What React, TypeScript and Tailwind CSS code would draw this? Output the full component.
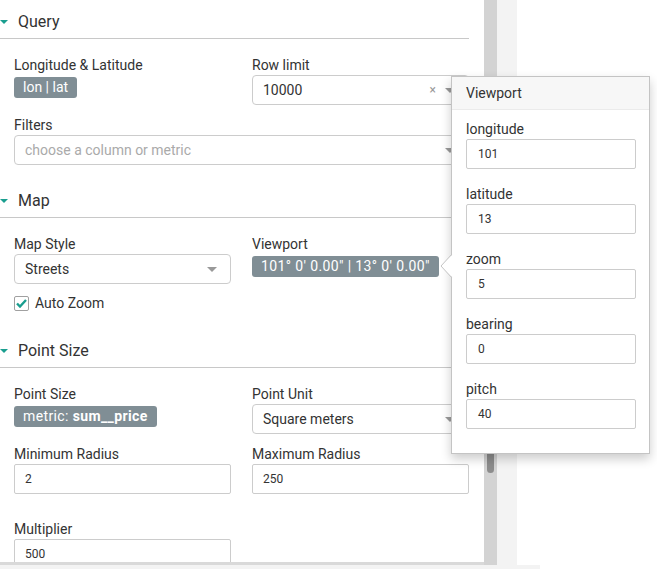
import React from "react";

const Caret = () => (
  <span className="w-0 h-0 border-x-[5px] border-x-transparent border-t-[5px] border-t-[#999]" />
);

function SectionHeader({ title }: { title: string }) {
  return (
    <div className="flex items-center h-[39px] pt-[5px] border-b border-[#c8c8c8]">
      <span className="w-0 h-0 border-x-[4px] border-x-transparent border-t-[4px] border-t-[#1a9e8f]" />
      <span className="ml-[10px] text-[16px] text-[#333]">{title}</span>
    </div>
  );
}

const Label = ({ children }: { children: React.ReactNode }) => (
  <div className="h-[20px] text-[14px] leading-[20px] text-[#333]">{children}</div>
);

const Tag = ({ children, wide }: { children: React.ReactNode; wide?: boolean }) => (
  <span
    className={
      wide
        ? "inline-block h-[21px] px-[9px] rounded-[3px] bg-[#808e95] text-white text-[14px] leading-[21px] whitespace-nowrap tracking-[0.38px]"
        : "inline-block h-[21px] px-[9px] rounded-[3px] bg-[#808e95] text-white text-[14px] leading-[21px] whitespace-nowrap"
    }
  >
    {children}
  </span>
);

function Select({ value, placeholder, clear }: { value?: string; placeholder?: string; clear?: boolean }) {
  return (
    <div className="flex items-center h-[30px] pl-[10px] pr-[13px] border border-[#ccc] rounded-[4px] bg-white text-[14px]">
      {value ? (
        <span className="flex-1 text-[#333]">{value}</span>
      ) : (
        <span className="flex-1 text-[#aaa]">{placeholder}</span>
      )}
      {clear && <span className="mr-[9px] text-[12px] text-[#999]">×</span>}
      <Caret />
    </div>
  );
}

const Input = ({ value }: { value: string }) => (
  <div className="flex items-center h-[30px] pl-[10px] border border-[#ccc] rounded-[2px] bg-white text-[12px] text-[#333]">
    {value}
  </div>
);

function ViewportPopover() {
  const fields: [string, string][] = [
    ["longitude", "101"],
    ["latitude", "13"],
    ["zoom", "5"],
    ["bearing", "0"],
    ["pitch", "40"],
  ];
  return (
    <div className="absolute left-[451px] top-[76px] w-[199px] bg-white border border-[#c4c4c4] shadow-[0_5px_10px_rgba(0,0,0,0.2)] z-10">
      <svg className="absolute left-[-12px] top-[177px]" width="13" height="24" viewBox="0 0 13 24">
        <polygon points="13,0 1,12 13,24" fill="white" />
        <polyline points="12,0 1,12 12,24" fill="none" stroke="#c4c4c4" />
      </svg>
      <div className="h-[33px] flex items-center px-[14px] bg-[#f7f7f7] border-b border-[#ebebeb] text-[14px] text-[#333]">
        Viewport
      </div>
      <div className="pl-[14px] pr-[13px] pt-[9px] pb-[9px]">
        {fields.map(([name, val]) => (
          <div key={name} className="mb-[15px]">
            <Label>{name}</Label>
            <div className="flex items-center h-[30px] pl-[11px] border border-[#ccc] rounded-[2px] text-[12px] text-[#333]">
              {val}
            </div>
          </div>
        ))}
      </div>
    </div>
  );
}

export default function App() {
  return (
    <div className="relative w-[657px] h-[569px] bg-white overflow-hidden font-['Roboto',sans-serif]">
      <div className="flex w-[540px] h-[565px]">
        <div className="w-[484px] h-full flex flex-col">
          <div className="h-[562px] overflow-hidden">
            <div className="w-[469px]">
              {/* Query */}
              <SectionHeader title="Query" />
              <div className="pl-[14px] pt-[16px]">
                <div className="grid grid-cols-2 gap-x-[21px]">
                  <div>
                    <Label>Longitude &amp; Latitude</Label>
                    <Tag>lon | lat</Tag>
                  </div>
                  <div>
                    <Label>Row limit</Label>
                    <Select value="10000" clear />
                  </div>
                </div>
                <div className="mt-[10px]">
                  <Label>Filters</Label>
                  <Select placeholder="choose a column or metric" />
                </div>
              </div>

              {/* Map */}
              <div className="mt-[14px]">
                <SectionHeader title="Map" />
              </div>
              <div className="pl-[14px] pt-[16px]">
                <div className="grid grid-cols-2 gap-x-[21px]">
                  <div>
                    <Label>Map Style</Label>
                    <Select value="Streets" />
                  </div>
                  <div>
                    <Label>Viewport</Label>
                    <Tag wide>101° 0' 0.00" | 13° 0' 0.00"</Tag>
                  </div>
                </div>
                <div className="mt-[12px] flex items-center h-[15px]">
                  <span className="flex items-center justify-center w-[15px] h-[15px] border border-[#a0a0a0] rounded-[2px] bg-white">
                    <svg width="11" height="9" viewBox="0 0 11 9">
                      <path d="M1 4.5 L4 7.5 L10 1" fill="none" stroke="#1a9e8f" strokeWidth="2.4" />
                    </svg>
                  </span>
                  <span className="ml-[6px] text-[14px] text-[#333]">Auto Zoom</span>
                </div>
              </div>

              {/* Point Size */}
              <div className="mt-[18px]">
                <SectionHeader title="Point Size" />
              </div>
              <div className="pl-[14px] pt-[16px]">
                <div className="grid grid-cols-2 gap-x-[21px]">
                  <div>
                    <Label>Point Size</Label>
                    <Tag wide>
                      metric: <b className="font-bold">sum__price</b>
                    </Tag>
                  </div>
                  <div>
                    <Label>Point Unit</Label>
                    <Select value="Square meters" />
                  </div>
                </div>
                <div className="mt-[10px] grid grid-cols-2 gap-x-[21px]">
                  <div>
                    <Label>Minimum Radius</Label>
                    <Input value="2" />
                  </div>
                  <div>
                    <Label>Maximum Radius</Label>
                    <Input value="250" />
                  </div>
                </div>
                <div className="mt-[25px] grid grid-cols-2 gap-x-[21px]">
                  <div>
                    <Label>Multiplier</Label>
                    <Input value="500" />
                  </div>
                </div>
              </div>
            </div>
          </div>
          <div className="h-[3px] bg-[#d9d9d9]" />
        </div>
        <div className="w-[13px] h-full bg-[#d3d3d3] flex flex-col items-center pt-[400px]">
          <div className="w-[7px] h-[73px] rounded-[4px] bg-[#8c8c8c]" />
        </div>
        <div className="w-[20px] h-full bg-[#f3f3f3]" />
        <div className="w-[23px] h-full bg-white" />
      </div>
      <div className="w-[540px] h-[4px] bg-[#f3f3f3]" />
      <ViewportPopover />
    </div>
  );
}
